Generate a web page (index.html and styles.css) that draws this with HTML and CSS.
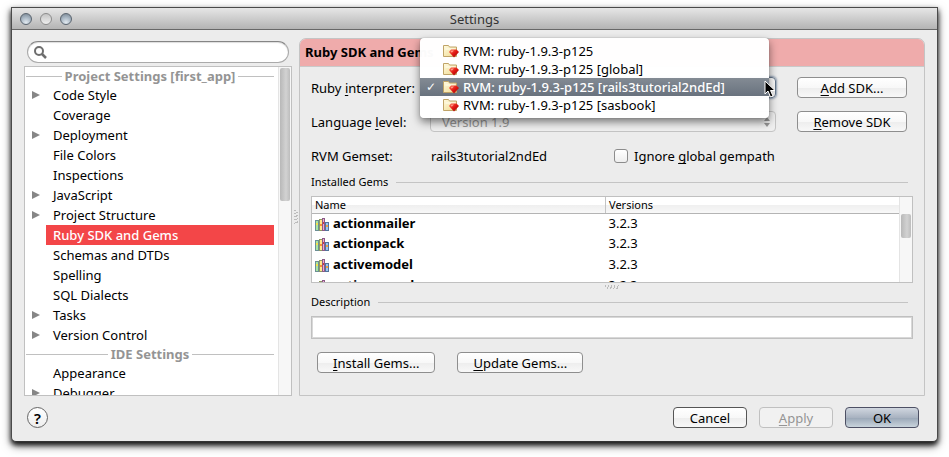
FILE: index.html
```html
<!DOCTYPE html>
<html lang="en">
<head>
<meta charset="utf-8">
<title>Settings</title>
<link rel="stylesheet" href="styles.css">
</head>
<body>
<svg class="defs" aria-hidden="true">
  <defs>
    <linearGradient id="ruby" x1="0" y1="0" x2="1" y2="1"><stop offset="0" stop-color="#ff6a50"/><stop offset=".5" stop-color="#e01712"/><stop offset="1" stop-color="#8e0505"/></linearGradient>
    <linearGradient id="paper" x1="0" y1="0" x2="1" y2="1"><stop offset="0" stop-color="#fffbe0"/><stop offset="1" stop-color="#efd88c"/></linearGradient>
    <symbol id="sdk" viewBox="0 0 16 14">
      <path d="M.5 12.500V1.500h5l1 1.500h7v9.500z" fill="url(#paper)" stroke="#c0a468"/>
      <path d="M2.500 5h10" stroke="#fffdf0"/>
      <path d="M8 5.500h5.500L16 8l-5 5.500L6 8z" fill="url(#ruby)"/>
      <path d="M8.500 6.500h2.500L9 8.500 7.500 8z" fill="#ff9a86"/>
    </symbol>
    <symbol id="gem" viewBox="0 0 14 13">
      <path d="M0 2h4v11H0z" fill="#6d8f94"/><path d="M1 3h2v9H1z" fill="#a9e6a0"/><path d="M1 5h2v2H1z" fill="#f6e04c"/>
      <path d="M4 1h3v12H4z" fill="#8f9a62"/><path d="M5 2h2v10H5z" fill="#ffe98b"/><path d="M5 6h2v2H5z" fill="#fa8b37"/>
      <path d="M7 0h3v13H7z" fill="#8b5c86"/><path d="M8 1h1v11H8z" fill="#f2a9d4"/><path d="M8 4h1v2H8z" fill="#d93b31"/>
      <path d="M10 4h4v9h-4z" fill="#54749c"/><path d="M11 5h2v7h-2z" fill="#9cc6f2"/><path d="M11 7h2v2h-2z" fill="#f0a342"/>
    </symbol>
  </defs>
</svg>
<main class="window">
  <header class="titlebar">
    <div class="lights"><button class="light" aria-label="Close"></button><button class="light off" aria-label="Minimize"></button><button class="light" aria-label="Zoom"></button></div>
    <h1>Settings</h1>
  </header>

  <div class="content">
    <aside class="sidebar">
      <div class="search">
        <svg viewBox="0 0 13 13" aria-hidden="true"><circle cx="5" cy="5" r="4" fill="none" stroke="#6e6e6e" stroke-width="2"/><path d="M8 8l4 4" stroke="#6e6e6e" stroke-width="2.500"/></svg>
        <input type="search" aria-label="Search settings">
      </div>
      <nav class="tree">
        <div class="tree-list">
          <h2>Project Settings [first_app]</h2>
          <ul>
            <li class="branch"><a href="#">Code Style</a></li>
            <li><a href="#">Coverage</a></li>
            <li class="branch"><a href="#">Deployment</a></li>
            <li><a href="#">File Colors</a></li>
            <li><a href="#">Inspections</a></li>
            <li class="branch"><a href="#">JavaScript</a></li>
            <li class="branch"><a href="#">Project Structure</a></li>
            <li class="selected"><a href="#">Ruby SDK and Gems</a></li>
            <li><a href="#">Schemas and DTDs</a></li>
            <li><a href="#">Spelling</a></li>
            <li><a href="#">SQL Dialects</a></li>
            <li class="branch"><a href="#">Tasks</a></li>
            <li class="branch"><a href="#">Version Control</a></li>
          </ul>
          <h2>IDE Settings</h2>
          <ul>
            <li><a href="#">Appearance</a></li>
            <li class="branch"><a href="#">Debugger</a></li>
          </ul>
        </div>
        <div class="track"><div class="thumb thumb-tree"></div></div>
      </nav>
    </aside>
    <div class="splitter"><span></span></div>

    <section class="panel">
      <h2 class="panel-title">Ruby SDK and Gems</h2>
      <div class="panel-body">
        <div class="form">
          <label for="interpreter">Ruby <u>i</u>nterpreter:</label>
          <div class="combo focused">
            <select id="interpreter"><option>RVM: ruby-1.9.3-p125 [rails3tutorial2ndEd]</option></select>
            <div class="menu" role="listbox" aria-label="Ruby interpreter">
              <button role="option"><svg><use href="#sdk"/></svg>RVM: ruby-1.9.3-p125</button>
              <button role="option"><svg><use href="#sdk"/></svg>RVM: ruby-1.9.3-p125 [global]</button>
              <button role="option" class="current" aria-selected="true"><svg><use href="#sdk"/></svg>RVM: ruby-1.9.3-p125 [rails3tutorial2ndEd]</button>
              <button role="option"><svg><use href="#sdk"/></svg>RVM: ruby-1.9.3-p125 [sasbook]</button>
            </div>
            <svg class="cursor" viewBox="0 0 12 18" aria-hidden="true"><path d="M1 1v13l3-3 2.500 6 2.500-1-2.500-5.500H11z" fill="#000" stroke="#fff"/></svg>
          </div>
          <button class="btn"><span><u>A</u>dd SDK...</span></button>

          <label for="level">Language <u>l</u>evel:</label>
          <div class="combo disabled">
            <select id="level" disabled><option>Version 1.9</option></select>
            <svg class="arrows" viewBox="0 0 6 10" aria-hidden="true"><path d="M0 4h6L3 0zM0 6h6L3 10z" fill="#969696"/></svg>
          </div>
          <button class="btn"><span><u>R</u>emove SDK</span></button>

          <span>RVM Gemset:</span>
          <div class="gemset">
            <span>rails3tutorial2ndEd</span>
            <label class="check"><input type="checkbox"><span>Ignore <u>g</u>lobal gempath</span></label>
          </div>
        </div>

        <h3>Installed Gems</h3>
        <div class="gems">
          <table>
            <thead><tr><th>Name</th><th>Versions</th></tr></thead>
            <tbody>
              <tr><td><svg><use href="#gem"/></svg>actionmailer</td><td>3.2.3</td></tr>
              <tr><td><svg><use href="#gem"/></svg>actionpack</td><td>3.2.3</td></tr>
              <tr><td><svg><use href="#gem"/></svg>activemodel</td><td>3.2.3</td></tr>
              <tr><td><svg><use href="#gem"/></svg>activerecord</td><td>3.2.3</td></tr>
            </tbody>
          </table>
          <div class="track track-gems"><div class="thumb thumb-gems"></div></div>
        </div>
        <div class="grip"><span></span></div>

        <h3>Description</h3>
        <input class="description" type="text" aria-label="Description">
        <div class="actions">
          <button class="btn"><span><u>I</u>nstall Gems...</span></button>
          <button class="btn"><span><u>U</u>pdate Gems...</span></button>
        </div>
      </div>
    </section>
  </div>

  <footer>
    <button class="help" aria-label="Help">?</button>
    <button class="btn strong">Cancel</button>
    <button class="btn" disabled><span><u>A</u>pply</span></button>
    <button class="btn primary">OK</button>
  </footer>
</main>
</body>
</html>
```
FILE: styles.css
```css
* { box-sizing: border-box; }

body {
  margin: 0;
  background: #fff;
  color: #000;
  font: 13px/20px "Noto Sans", "Open Sans", sans-serif;
  overflow: hidden;
}

h1, h2, h3, ul { margin: 0; padding: 0; font: inherit; }
button, input, select { font: inherit; color: inherit; margin: 0; }
a { color: inherit; text-decoration: none; }
u { text-decoration: underline 1px; text-underline-offset: 2px; text-decoration-skip-ink: none; }
.defs { position: absolute; width: 0; height: 0; }

.window {
  margin: 7px 11px 15px;
  border: 1px solid #4a4a4a;
  border-bottom-color: #333;
  border-radius: 0 0 5px 5px;
  background: #ececec;
  box-shadow: 0 3px 5px rgba(0, 0, 0, .85), 0 4px 10px rgba(0, 0, 0, .5);
}

.titlebar {
  display: grid;
  grid-template-columns: 1fr auto 1fr;
  align-items: center;
  height: 22px;
  padding: 0 8px;
  border-bottom: 1px solid #686868;
  background: linear-gradient(#e6e6e6, #b4b4b4);
  color: #333;
}
.lights { display: flex; gap: 8px; }
.light {
  width: 12px;
  height: 12px;
  padding: 0;
  border: 1px solid #5b6570;
  border-radius: 50%;
  background: radial-gradient(circle at 50% 85%, #e2eaf1, #a5b3c0 55%, #76838f);
}
.light.off { border-color: #8c8c8c; background: linear-gradient(#c4c4c4, #efefef); }

.content { display: flex; padding: 8px 12px 0; }

.sidebar { flex: 0 0 268px; display: flex; flex-direction: column; gap: 3px; padding-top: 3px; }
.search {
  display: flex;
  align-items: center;
  gap: 4px;
  height: 22px;
  margin: 0 3px;
  padding: 0 6px;
  border: 1px solid #aaa;
  border-top-color: #858585;
  border-radius: 11px;
  background: #fff;
  box-shadow: inset 0 1px 1px #ddd;
}
.search svg { width: 13px; height: 13px; }
.search input { flex: 1; min-width: 0; padding: 0; border: 0; outline: 0; background: none; }

.tree { flex: 1; contain: size; display: flex; border: 1px solid #c0c0c0; background: #fff; overflow: hidden; }
.tree-list { flex: 1; padding-right: 4px; }
.tree h2 {
  display: flex;
  align-items: center;
  gap: 3px;
  padding-left: 1px;
  color: #949494;
  font-weight: 700;
  line-height: 18px;
  white-space: nowrap;
}
.tree h2::before, .tree h2::after { content: ""; flex: 1; border-top: 1px solid #c0c0c0; }
.tree ul { list-style: none; }
.tree li { display: flex; align-items: center; padding-left: 21px; }
.tree li a { flex: 1; padding-left: 7px; }
.branch::before {
  content: "";
  width: 8px;
  height: 8px;
  margin: 0 6px 0 -14px;
  background: #868686;
  clip-path: polygon(0 0, 100% 50%, 0 100%);
}
.selected a { background: #f34648; color: #fff; font-weight: 500; }

.track { flex: 0 0 13px; padding: 1px 1px 0; border-left: 1px solid #e4e4e4; background: #f7f7f7; }
.thumb { border-radius: 2px; background: linear-gradient(90deg, #b8b8b8, #d2d2d2 60%, #bdbdbd); }
.thumb-tree { height: 133px; }
.thumb-gems { height: 24px; }

.splitter { flex: 0 0 7px; display: flex; align-items: center; justify-content: center; }
.splitter span { width: 4px; height: 15px; background: repeating-linear-gradient(160deg, #bbb 0 1px, #ececec 1px 3px); }

.panel { flex: 1; min-width: 0; border: 1px solid #c4c4c4; border-radius: 7px 7px 0 0; }
.panel-title {
  padding: 0 5px;
  border-bottom: 1px solid #c9c9c9;
  border-radius: 6px 6px 0 0;
  background: #efabab;
  font-weight: 700;
  line-height: 27px;
}
.panel-body { padding: 10px 11px 22px; }

.form {
  display: grid;
  grid-template-columns: 119px 1fr 110px;
  grid-auto-rows: 21px;
  row-gap: 13px;
  align-items: center;
  padding-right: 6px;
}
.combo { position: relative; height: 21px; margin-right: 21px; }
.combo select {
  width: 100%;
  height: 21px;
  padding: 0 11px;
  border: 1px solid #8c8c8c;
  border-radius: 4px;
  background: linear-gradient(#fff, #eee);
  appearance: none;
}
.combo.focused select { border-color: #66788d; box-shadow: 0 0 2px 1px #8c9cb0; }
.combo.disabled select { border-color: #c4c4c4; background: #efefef; color: #969696; opacity: 1; }
.arrows { position: absolute; right: 6px; top: 6px; width: 6px; height: 10px; }

.menu {
  position: absolute;
  z-index: 2;
  inset: -39px 7px auto -10px;
  padding: 4px 0;
  border-radius: 4px;
  background: rgba(255, 255, 255, .98);
  box-shadow: 0 0 1px #666, 0 4px 8px rgba(0, 0, 0, .5);
}
.menu button {
  position: relative;
  display: flex;
  align-items: center;
  gap: 4px;
  width: 100%;
  height: 18px;
  padding: 0 0 0 23px;
  border: 0;
  background: none;
  line-height: 18px;
  white-space: nowrap;
}
.menu svg { width: 16px; height: 14px; }
.menu .current { background: linear-gradient(#838b94, #68727e); color: #fff; font-weight: 500; }
.menu .current::before { content: "✓"; position: absolute; left: 6px; font: 700 12px/18px "DejaVu Sans", sans-serif; }
.cursor { position: absolute; z-index: 3; right: 0; top: 3px; width: 12px; height: 18px; }

.btn {
  display: flex;
  align-items: center;
  justify-content: center;
  height: 21px;
  padding: 0 15px;
  border: 1px solid #8e8e8e;
  border-radius: 4px;
  background: linear-gradient(#fff, #f8f8f8 50%, #ededed 51%, #f8f8f8);
  line-height: 18px;
  white-space: nowrap;
}
.btn.strong { border-color: #555; }
.btn.primary { border-color: #4d5064; background: linear-gradient(#d0d6df, #a9b3c1 50%, #9aa7b7 52%, #c9d4dc); }
.btn:disabled { border-color: #c0c0c0; background: #f1f1f1; color: #949494; }

.gemset { grid-column: 2 / 4; display: grid; grid-template-columns: 183px auto; padding-left: 1px; }
.check { display: flex; align-items: center; gap: 6px; }
.check input {
  width: 14px;
  height: 14px;
  border: 1px solid #8c8c8c;
  border-radius: 3px;
  background: linear-gradient(#fff, #eee);
  appearance: none;
}

h3 { display: flex; align-items: center; gap: 8px; padding-right: 5px; font-size: 11px; line-height: 16px; }
h3::after { content: ""; flex: 1; border-top: 1px solid #c4c4c4; }
.form + h3 { margin-top: 8px; }

.gems { display: flex; height: 87px; margin-top: 6px; border: 1px solid #c0c0c0; background: #fff; overflow: hidden; }
table { flex: 1; height: 100px; border-collapse: collapse; table-layout: fixed; }
th {
  height: 16px;
  padding: 0 3px;
  border-bottom: 1px solid #b4b4b4;
  background: linear-gradient(#fff 0 50%, #efefef 51%, #f8f8f8);
  font-size: 11px;
  font-weight: 400;
  line-height: 15px;
  text-align: left;
}
th:first-child { width: 50%; border-right: 1px solid #c4c4c4; }
td { height: 21px; padding: 0 3px; line-height: 18px; vertical-align: top; }
td:first-child { font-weight: 700; }
td svg { width: 14px; height: 13px; margin-right: 4px; vertical-align: -3px; }
.track-gems { padding-top: 17px; }

.grip { display: flex; justify-content: center; height: 11px; padding-top: 2px; }
.grip span { width: 15px; height: 4px; background: repeating-linear-gradient(110deg, #bbb 0 1px, #ececec 1px 3px); }

.description {
  display: block;
  width: 100%;
  height: 23px;
  margin-top: 6px;
  padding: 0 4px;
  border: 1px solid #c0c0c0;
  background: #fff;
  box-shadow: inset 0 0 0 1px #d8d8d8;
}
.actions { display: flex; gap: 22px; padding: 13px 6px 0; }

footer { display: flex; gap: 12px; padding: 11px 18px 13px 15px; }
footer .btn { width: 74px; padding: 0; }
.help {
  width: 21px;
  height: 21px;
  margin-right: auto;
  padding: 0;
  border: 1px solid #666;
  border-radius: 50%;
  background: linear-gradient(#fff, #eee);
  font-size: 15px;
  font-weight: 600;
  line-height: 18px;
}
```
